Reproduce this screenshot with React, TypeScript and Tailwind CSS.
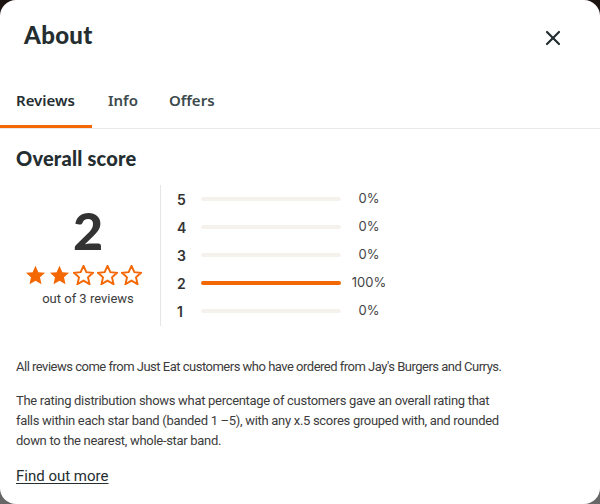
import { X } from 'lucide-react'

const rows = [
  { star: 5, pct: 0 },
  { star: 4, pct: 0 },
  { star: 3, pct: 0 },
  { star: 2, pct: 100 },
  { star: 1, pct: 0 },
]

function Star({ filled }: { filled: boolean }) {
  return (
    <svg width="21" height="20" viewBox="0 0 24 23">
      <path
        d="M12 1l3.3 7.2 7.7.8-5.8 5.2 1.7 7.8L12 18l-6.9 4 1.7-7.8L1 9l7.7-.8z"
        fill={filled ? '#f36805' : 'none'}
        stroke="#f36805"
        strokeWidth={filled ? 0 : 2.2}
        strokeLinejoin="miter"
      />
    </svg>
  )
}

export default function App() {
  return (
    <div className="w-[600px] h-[504px] bg-gradient-to-b from-[#1b1411] to-[#676767]">
      <div className="h-full bg-white rounded-[16px] overflow-hidden text-[#242e30] font-['Roboto',sans-serif]">
        <div className="flex items-center justify-between pl-6 pr-[35px] pt-[6px] h-[72px] pb-2">
          <h1 className="text-[24px] font-black font-['Lato',sans-serif] tracking-[0.3px]">About</h1>
          <X size={24} strokeWidth={2.2} className="text-[#242e30] mt-[5px]" />
        </div>

        <div className="flex border-b border-[#e8e8e8] h-[57px] items-stretch">
          <div className="w-[92px] pl-4 flex items-center border-b-[3px] border-[#f36805] pt-[3px] text-[15px] font-semibold font-['Noto_Sans',sans-serif]">
            Reviews
          </div>
          <div className="pl-4 pr-4 flex items-center text-[15px] font-semibold font-['Noto_Sans',sans-serif] text-[#3c4a4d]">
            Info
          </div>
          <div className="pl-[15px] flex items-center text-[15px] font-semibold font-['Noto_Sans',sans-serif] text-[#3c4a4d]">
            Offers
          </div>
        </div>

        <div className="px-4">
          <h2 className="mt-[17px] text-[20px] font-black font-['Lato',sans-serif] leading-[24px] tracking-[0.2px]">
            Overall score
          </h2>

          <div className="flex mt-[15px]">
            <div className="w-[144px] flex flex-col items-center justify-center">
              <div className="text-[52px] leading-[48px] font-black font-['Lato',sans-serif] text-[#333] mt-[3px]">2</div>
              <div className="flex gap-[3px] mt-[11px] ml-[-10px]">
                {[1, 2, 3, 4, 5].map((i) => (
                  <Star key={i} filled={i <= 2} />
                ))}
              </div>
              <div className="mt-[4px] text-[13px] text-[#3c3c3c]">out of 3 reviews</div>
            </div>

            <div className="border-l border-[#e6e6e6] pl-[16px] h-[141px] flex flex-col">
              {rows.map((r) => (
                <div key={r.star} className="flex items-center h-[28px]">
                  <span className="w-[24px] text-[14px] font-semibold font-['Inter',sans-serif] text-[#333]">{r.star}</span>
                  <div className="w-[140px] h-[4px] rounded-full bg-[#f5f2ee]">
                    <div className="h-full rounded-full bg-[#f36805]" style={{ width: `${r.pct}%` }} />
                  </div>
                  <span className="w-[46px] ml-[5px] text-center text-[13px] font-['Inter',sans-serif] text-[#444]">
                    {r.pct}%
                  </span>
                </div>
              ))}
            </div>
          </div>

          <p className="mt-[31px] text-[13px] leading-[20px] text-[#3c3c3c] tracking-[-0.5px]">
            All reviews come from Just Eat customers who have ordered from Jay's Burgers and Currys.
          </p>
          <p className="w-[497px] mt-[14px] text-[13px] leading-[20px] text-[#3c3c3c] tracking-[-0.3px]">
            The rating distribution shows what percentage of customers gave an overall rating that falls within each star
            band (banded 1 –5), with any x.5 scores grouped with, and rounded down to the nearest, whole-star band.
          </p>
          <a className="inline-block mt-[14px] text-[15px] underline underline-offset-2 text-[#242e30]">Find out more</a>
        </div>
      </div>
    </div>
  )
}
